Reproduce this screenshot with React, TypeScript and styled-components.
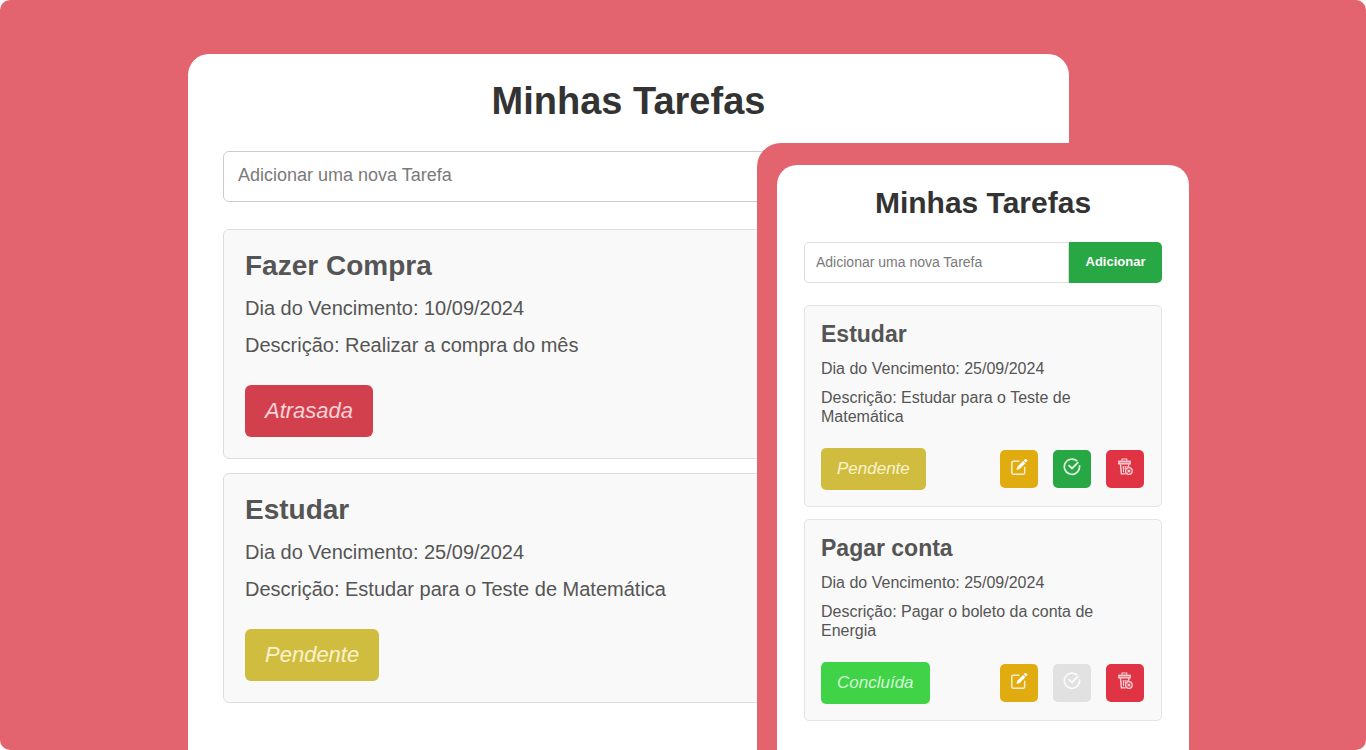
import React from "react";
import styled, { createGlobalStyle } from "styled-components";

type Size = "large" | "small";
type Status = "Atrasada" | "Pendente" | "Concluída";

interface Task {
  title: string;
  due: string;
  description: string;
  status: Status;
}

const GlobalStyle = createGlobalStyle`
  *, *::before, *::after { box-sizing: border-box; }
  body {
    margin: 0;
    background: #fff;
    font-family: "Liberation Sans", Arial, sans-serif;
  }
  h1, h2, p, ul { margin: 0; padding: 0; }
  button, input { font-family: inherit; }
`;

const coral = "#e3636e";

const statusColors: Record<Status, { back: string; text: string }> = {
  Atrasada: { back: "#d2404e", text: "#fbd3d8" },
  Pendente: { back: "#d0bd40", text: "#faf2cc" },
  Concluída: { back: "#40d347", text: "#d3fad5" },
};

const Stage = styled.main`
  display: grid;
  grid-template-columns: 188fr 569fr 312fr 140fr 157fr;
  grid-template-rows: 1fr;
  min-height: 100vh;
  background: ${coral};
  border-radius: 10px;
  overflow: hidden;
`;

const BackPanel = styled.section`
  grid-column: 2 / 4;
  grid-row: 1;
  margin-top: 54px;
  padding: 24px 35px 40px;
  background: #fff;
  border-radius: 21px 21px 0 0;
`;

const FrontFrame = styled.div`
  grid-column: 3 / 5;
  grid-row: 1;
  display: flex;
  margin-top: 143px;
  padding: 22px 20px 0;
  background: ${coral};
  border-radius: 24px 24px 0 0;
  z-index: 1;
`;

const FrontPanel = styled.section`
  flex: 1;
  min-width: 0;
  padding: 20px 27px 29px;
  background: #fff;
  border-radius: 20px 20px 0 0;
`;

const Heading = styled.h1<{ $size: Size }>`
  color: #333;
  text-align: center;
  font-size: ${(p) => (p.$size === "large" ? 38 : 30)}px;
  line-height: ${(p) => (p.$size === "large" ? 46 : 36)}px;
`;

const AddForm = styled.form<{ $size: Size }>`
  display: flex;
  height: ${(p) => (p.$size === "large" ? 51 : 41)}px;
  margin: ${(p) => (p.$size === "large" ? "27px 0" : "21px 0 22px")};
`;

const AddInput = styled.input<{ $size: Size }>`
  flex: 1;
  min-width: 0;
  padding: ${(p) => (p.$size === "large" ? "0 14px 3px" : "0 11px 2px")};
  border: ${(p) => (p.$size === "large" ? "1px solid #ccc" : "1px solid #ddd")};
  border-radius: ${(p) => (p.$size === "large" ? "6px" : "5px 0 0 5px")};
  background: #fff;
  color: #333;
  font-size: ${(p) => (p.$size === "large" ? 18 : 14)}px;
  &::placeholder { color: #7a7a7a; opacity: 1; }
`;

const AddButton = styled.button`
  width: 93px;
  padding: 0 0 2px;
  border: 0;
  border-radius: 0 5px 5px 0;
  background: #28a745;
  color: #fff;
  font-size: 13px;
  font-weight: 700;
  cursor: pointer;
`;

const TaskList = styled.ul<{ $size: Size }>`
  display: flex;
  flex-direction: column;
  gap: ${(p) => (p.$size === "large" ? 14 : 12)}px;
  list-style: none;
`;

const Card = styled.li<{ $size: Size }>`
  padding: ${(p) => (p.$size === "large" ? "20px 21px 21px" : "15px 17px 16px 16px")};
  border: 1px solid ${(p) => (p.$size === "large" ? "#ddd" : "#e4e4e4")};
  border-radius: ${(p) => (p.$size === "large" ? 6 : 5)}px;
  background: #f9f9f9;
  color: #555;
`;

const CardTitle = styled.h2<{ $size: Size }>`
  font-size: ${(p) => (p.$size === "large" ? 28 : 23)}px;
  line-height: ${(p) => (p.$size === "large" ? 32 : 26)}px;
  margin-bottom: ${(p) => (p.$size === "large" ? 14 : 12)}px;
`;

const CardDetails = styled.div<{ $size: Size }>`
  display: flex;
  flex-direction: column;
  gap: ${(p) => (p.$size === "large" ? 13 : 10)}px;
  font-size: ${(p) => (p.$size === "large" ? 20 : 16)}px;
  line-height: ${(p) => (p.$size === "large" ? 24 : 19)}px;
`;

const CardFooter = styled.div<{ $size: Size }>`
  display: flex;
  align-items: center;
  justify-content: space-between;
  margin-top: ${(p) => (p.$size === "large" ? 28 : 22)}px;
`;

const Badge = styled.span<{ $size: Size; $status: Status }>`
  padding: 0 ${(p) => (p.$size === "large" ? 20 : 16)}px;
  border-radius: ${(p) => (p.$size === "large" ? 6 : 5)}px;
  background: ${(p) => statusColors[p.$status].back};
  color: ${(p) => statusColors[p.$status].text};
  font-size: ${(p) => (p.$size === "large" ? 22 : 17)}px;
  font-style: italic;
  line-height: ${(p) => (p.$size === "large" ? 52 : 42)}px;
`;

const Actions = styled.div`
  display: flex;
  gap: 15px;
`;

const IconButton = styled.button<{ $color: string }>`
  display: flex;
  align-items: center;
  justify-content: center;
  width: 38px;
  height: 38px;
  padding: 0 0 4px;
  border: 0;
  border-radius: 5px;
  background: ${(p) => p.$color};
  color: #fff;
  cursor: pointer;
`;

const Icon = styled.svg.attrs({ viewBox: "0 0 18 18", "aria-hidden": true })`
  width: 18px;
  height: 18px;
  fill: none;
  stroke: currentColor;
`;

const EditIcon = () => (
  <Icon>
    <path d="M9.5 3.3H3.3Q1.8 3.3 1.8 4.8V14.8Q1.8 16.2 3.3 16.2H13.2Q14.7 16.2 14.7 14.8V8.8" strokeWidth="1.5" strokeOpacity=".8" />
    <path d="M6.5 12L7.3 8.8L13.1 3L15.4 5.3L9.6 11.1Z" fill="currentColor" stroke="none" />
    <path d="M13.7 2.4L14.9 1.2Q15.6 .6 16.3 1.2L17.1 2Q17.7 2.7 17.1 3.4L15.9 4.6Z" fill="currentColor" stroke="none" />
  </Icon>
);

const CheckIcon = () => (
  <Icon strokeWidth="1.7" strokeOpacity=".85">
    <path d="M14.2 3.2A7.6 7.6 0 1 0 16.4 7.2" />
    <path d="M5.5 7.1L9 10.5L15.3 4.1" strokeWidth="1.9" />
  </Icon>
);

const TrashIcon = () => (
  <Icon strokeOpacity=".8">
    <path d="M6 2.6V1H10.8V2.6" strokeWidth="1.1" />
    <rect x="2.8" y="3.2" width="11.4" height="2.7" strokeWidth="1.2" fill="currentColor" fillOpacity=".4" />
    <path d="M4.5 6.4L5.4 15.9H9.6M12.8 6.4L12.6 8.8" strokeWidth="1.4" />
    <path d="M7.2 8L7.6 14.2M9.2 8V11M11 8V9" strokeWidth="1.1" />
    <circle cx="12.9" cy="13" r="3.3" strokeWidth="1.3" />
    <path d="M11.5 11.6L14.3 14.4M14.3 11.6L11.5 14.4" strokeWidth="1.1" />
  </Icon>
);

const TaskActions = ({ done }: { done: boolean }) => (
  <Actions>
    <IconButton type="button" $color="#e0ac10" aria-label="Editar">
      <EditIcon />
    </IconButton>
    <IconButton type="button" $color={done ? "#e1e1e1" : "#28a745"} disabled={done} aria-label="Concluir">
      <CheckIcon />
    </IconButton>
    <IconButton type="button" $color="#e03344" aria-label="Excluir">
      <TrashIcon />
    </IconButton>
  </Actions>
);

const TaskCard = ({ task, size }: { task: Task; size: Size }) => (
  <Card $size={size}>
    <CardTitle $size={size}>{task.title}</CardTitle>
    <CardDetails $size={size}>
      <p>{`Dia do Vencimento: ${task.due}`}</p>
      <p>{`Descrição: ${task.description}`}</p>
    </CardDetails>
    <CardFooter $size={size}>
      <Badge $size={size} $status={task.status}>{task.status}</Badge>
      {size === "small" && <TaskActions done={task.status === "Concluída"} />}
    </CardFooter>
  </Card>
);

const study: Task = {
  title: "Estudar",
  due: "25/09/2024",
  description: "Estudar para o Teste de Matemática",
  status: "Pendente",
};

const backTasks: Task[] = [
  { title: "Fazer Compra", due: "10/09/2024", description: "Realizar a compra do mês", status: "Atrasada" },
  study,
];

const frontTasks: Task[] = [
  study,
  { title: "Pagar conta", due: "25/09/2024", description: "Pagar o boleto da conta de Energia", status: "Concluída" },
];

const TaskBoard = ({ tasks, size }: { tasks: Task[]; size: Size }) => (
  <>
    <Heading $size={size}>Minhas Tarefas</Heading>
    <AddForm $size={size} onSubmit={(e) => e.preventDefault()}>
      <AddInput $size={size} type="text" placeholder="Adicionar uma nova Tarefa" aria-label="Adicionar uma nova Tarefa" />
      {size === "small" && <AddButton type="submit">Adicionar</AddButton>}
    </AddForm>
    <TaskList $size={size}>
      {tasks.map((task) => (
        <TaskCard key={task.title} task={task} size={size} />
      ))}
    </TaskList>
  </>
);

export default function App() {
  return (
    <>
      <GlobalStyle />
      <Stage>
        <BackPanel>
          <TaskBoard tasks={backTasks} size="large" />
        </BackPanel>
        <FrontFrame>
          <FrontPanel>
            <TaskBoard tasks={frontTasks} size="small" />
          </FrontPanel>
        </FrontFrame>
      </Stage>
    </>
  );
}
